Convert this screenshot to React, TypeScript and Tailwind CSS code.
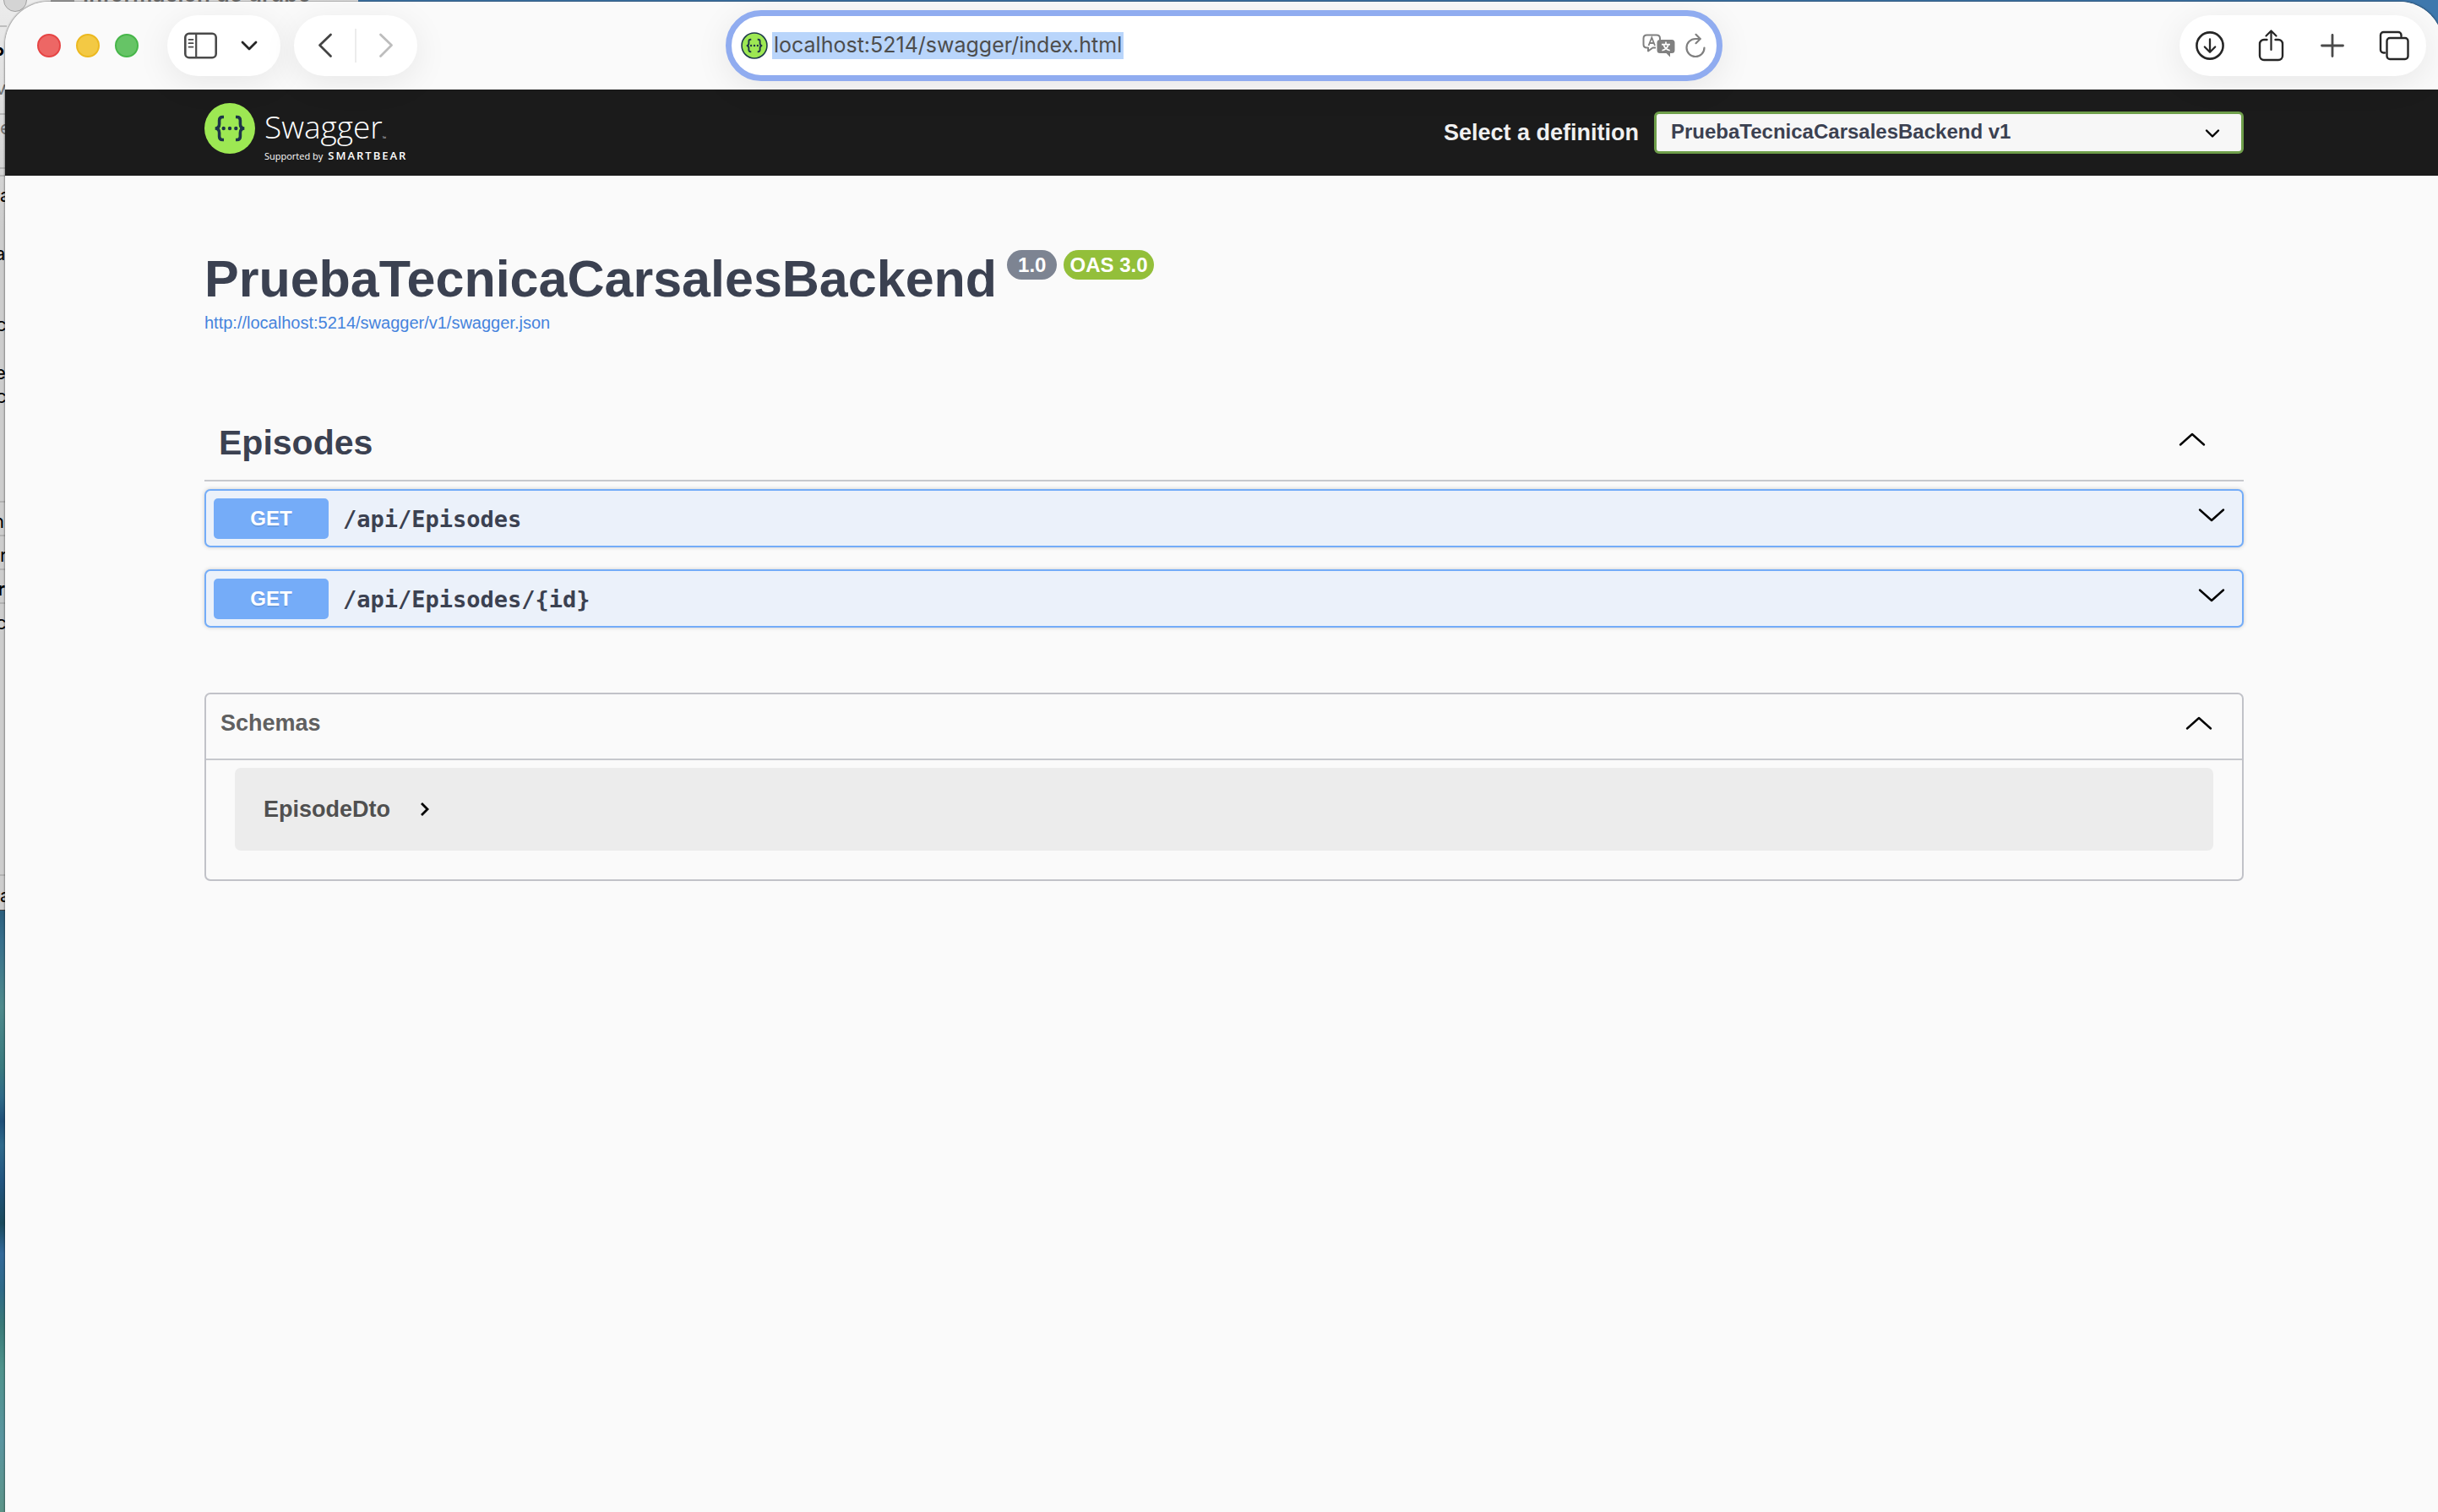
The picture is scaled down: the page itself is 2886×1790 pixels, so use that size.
import React from "react";

type Fragment = { char: string; className: string };

const fragments: Fragment[] = [
  { char: "P", className: "top-[50px] -left-[8px] text-[20px] font-bold text-black" },
  { char: "v", className: "top-[90px] -left-[5px] text-[22px] text-neutral-500" },
  { char: "e", className: "top-[137px] left-0 text-[22px] text-neutral-500" },
  { char: "a", className: "top-[217px] left-0 text-[22px] text-black" },
  { char: "a", className: "top-[286px] -left-[6px] text-[22px] text-black" },
  { char: "c", className: "top-[370px] -left-[5px] text-[22px] text-black" },
  { char: "e", className: "top-[427px] -left-[6px] text-[22px] text-black" },
  { char: "c", className: "top-[455px] -left-[5px] text-[22px] text-black" },
  { char: "n", className: "top-[603px] -left-[8px] text-[22px] text-black" },
  { char: "r", className: "top-[643px] left-0 text-[22px] text-black" },
  { char: "r", className: "top-[683px] -left-[3px] text-[22px] font-bold text-black" },
  { char: "c", className: "top-[723px] -left-[5px] text-[22px] text-black" },
  { char: "a", className: "top-[1046px] left-0 text-[22px] text-black" },
];

const rules = [
  "top-[30px]",
  "top-[134px]",
  "top-[198px]",
  "top-[207px]",
  "top-[593px]",
  "top-[633px]",
  "top-[673px]",
  "top-[713px]",
  "top-[1035px]",
];

const operations = [
  { method: "GET", path: "/api/Episodes" },
  { method: "GET", path: "/api/Episodes/{id}" },
];

const pill = "flex h-18 items-center rounded-full bg-white shadow-[0_8px_40px_rgba(0,0,0,0.08)]";

function BackgroundWindow() {
  return (
    <div
      aria-hidden="true"
      className="absolute top-0 left-0 h-[1078px] w-[424px] overflow-hidden border-b border-neutral-700 bg-linear-to-b from-[#ececec] to-[#cdcdcd] to-25% font-['Inter',sans-serif]"
    >
      <span className="absolute -top-[14px] left-1 size-7 rounded-full border border-neutral-400 bg-neutral-300" />
      <span className="absolute top-0 left-15 h-0.5 w-7 bg-neutral-400" />
      <span className="absolute -top-[23px] left-[98px] text-[26px] leading-8 font-semibold whitespace-nowrap text-neutral-500">
        Información de grupo
      </span>
      {rules.map((r) => (
        <span key={r} className={`absolute left-0 h-0.5 w-2 bg-neutral-400/60 ${r}`} />
      ))}
      {fragments.map((f, i) => (
        <span key={i} className={`absolute leading-7 ${f.className}`}>
          {f.char}
        </span>
      ))}
    </div>
  );
}

function Chevron({ up = false }: { up?: boolean }) {
  return (
    <svg
      viewBox="0 0 32 18"
      className="h-[18px] w-8"
      fill="none"
      stroke="black"
      strokeWidth="2.4"
      strokeLinecap="round"
      strokeLinejoin="round"
    >
      <path d={up ? "M2 15.5 16 3 30 15.5" : "M2 2.5 16 15 30 2.5"} />
    </svg>
  );
}

function BracesMark({ className, outlined = false }: { className: string; outlined?: boolean }) {
  return (
    <svg viewBox="0 0 60 60" className={className} fill="none">
      <circle
        cx="30"
        cy="30"
        r={outlined ? 28 : 30}
        fill="#9de853"
        stroke={outlined ? "#1d3a4a" : "none"}
        strokeWidth="3"
      />
      <g stroke="#1d3548" strokeWidth="3.6">
        <path d="M23 16.5h-1.5c-2.6 0-3.900 1.400-3.900 4v4.200c0 3-1.300 5.200-4.900 5.300 3.600.1 4.900 2.300 4.900 5.300v4.200c0 2.600 1.300 4 3.900 4H23" />
        <path d="M37 16.5h1.5c2.6 0 3.900 1.400 3.900 4v4.200c0 3 1.300 5.200 4.900 5.300-3.600.1-4.900 2.300-4.900 5.300v4.200c0 2.600-1.300 4-3.900 4H37" />
      </g>
      <g fill="#1d3548">
        <circle cx="22.7" cy="30" r="2.2" />
        <circle cx="30" cy="30" r="2.2" />
        <circle cx="37.3" cy="30" r="2.2" />
      </g>
    </svg>
  );
}

function BrowserToolbar() {
  return (
    <header className="flex h-26 items-center justify-between bg-[#fafafa] px-5">
      <div className="flex flex-1 items-center">
        <div className="ml-[18px] flex gap-[18px]">
          <button aria-label="Close" className="size-7 rounded-full border-2 border-[#e64545] bg-[#ed6765]" />
          <button aria-label="Minimize" className="size-7 rounded-full border-2 border-[#ecb920] bg-[#f3c944]" />
          <button aria-label="Zoom" className="size-7 rounded-full border-2 border-[#47b64a] bg-[#66c466]" />
        </div>
        <div className={`ml-[34px] w-[134px] justify-between pr-[27px] pl-5 ${pill}`}>
          <button aria-label="Sidebar">
            <svg viewBox="0 0 40 32" className="h-8 w-10" fill="none" stroke="#4a4a4a" strokeWidth="2.6">
              <rect x="1.3" y="1.8" width="36.4" height="28.4" rx="4.5" />
              <path d="M14.2 2v28" strokeWidth="2.2" />
              <path d="M5.5 8.800h5M5.5 13.200h5M5.5 17.600h5" strokeWidth="1.8" strokeLinecap="round" />
            </svg>
          </button>
          <button aria-label="Tab groups">
            <svg viewBox="0 0 20 14" className="h-3.5 w-5" fill="none" stroke="#262626" strokeWidth="2.8" strokeLinecap="round" strokeLinejoin="round">
              <path d="M2 3l8 8 8-8" />
            </svg>
          </button>
        </div>
        <div className={`ml-4 w-[146px] justify-between px-7 ${pill}`}>
          <button aria-label="Back">
            <svg viewBox="0 0 18 30" className="h-[30px] w-[18px]" fill="none" stroke="#444" strokeWidth="2.8" strokeLinecap="round" strokeLinejoin="round">
              <path d="M15.5 2 2.5 14.500l13 13" />
            </svg>
          </button>
          <span className="h-10 w-0.5 bg-[#ececec]" />
          <button aria-label="Forward" disabled>
            <svg viewBox="0 0 18 30" className="h-[30px] w-[18px]" fill="none" stroke="#bdbdbd" strokeWidth="2.8" strokeLinecap="round" strokeLinejoin="round">
              <path d="M2.5 2l13 12.500-13 13" />
            </svg>
          </button>
        </div>
      </div>

      <div className="flex h-21 w-[1180px] items-center rounded-full border-7 border-[#90acf0] bg-white pr-3 pl-[11px] shadow-[0_8px_40px_rgba(0,0,0,0.08)]">
        <BracesMark className="size-8" outlined />
        <input
          aria-label="Address"
          defaultValue="localhost:5214/swagger/index.html"
          className="ml-[5px] field-sizing-content h-8 bg-[#b9d5fb] px-0.5 font-['Inter',sans-serif] text-[25px] text-[#4d4d4d] outline-none"
        />
        <button aria-label="Translate" className="ml-auto">
          <svg viewBox="0 0 40 28" className="h-7 w-10" fill="none" stroke="#808080" strokeWidth="2">
            <path d="M16 16.500h-3.500L7 20.500v-4H5.500c-2.500 0-4-1.500-4-4V5.500c0-2.500 1.500-4 4-4h11.500c2.500 0 4 1.500 4 4V7" strokeLinejoin="round" />
            <path d="M7.500 14 11.300 4.500 15 14M8.800 11h5" strokeWidth="1.8" />
            <path d="M21 7h14a3.500 3.500 0 0 1 3.500 3.500v9A3.500 3.500 0 0 1 35 23h-2v4.500L28.500 23H21a3.500 3.500 0 0 1-3.500-3.500v-9A3.500 3.500 0 0 1 21 7Z" fill="#808080" stroke="none" />
            <path d="M28 9.500v2.800M23 12.700h10M31 12.700c-1 3.500-4 6-7.500 7M25.200 12.700c1 3.500 4 6 7.500 7" stroke="white" strokeWidth="1.7" />
          </svg>
        </button>
        <button aria-label="Reload" className="ml-2.5">
          <svg viewBox="0 0 26 30" className="h-[30px] w-[26px]" fill="none" stroke="#808080" strokeWidth="2.2" strokeLinecap="round" strokeLinejoin="round">
            <path d="M23.500 17.500A10.500 10.500 0 1 1 13 7h5.500" />
            <path d="M13.500 1.800 18.700 7l-5.200 5.200" />
          </svg>
        </button>
      </div>

      <div className="flex flex-1 justify-end">
        <div className={`w-[292px] justify-between pr-5 pl-[18px] ${pill}`}>
          <button aria-label="Downloads" className="flex w-9 justify-center">
            <svg viewBox="0 0 36 36" className="size-9" fill="none" stroke="#262626" strokeWidth="2.6" strokeLinecap="round" strokeLinejoin="round">
              <circle cx="18" cy="18" r="15.6" />
              <path d="M18 10.500v15M11.800 19.500l6.200 6.200 6.200-6.200" strokeWidth="2.3" />
            </svg>
          </button>
          <button aria-label="Share" className="flex w-9 justify-center">
            <svg viewBox="0 0 32 40" className="h-10 w-8" fill="none" stroke="#262626" strokeWidth="2.4" strokeLinecap="round" strokeLinejoin="round">
              <path d="M10.500 13H7a5 5 0 0 0-5 5v14a5 5 0 0 0 5 5h17a5 5 0 0 0 5-5V18a5 5 0 0 0-5-5h-3.500" />
              <path d="M15.500 25V3M9.500 8.500l6-6 6 6" strokeWidth="2.2" />
            </svg>
          </button>
          <button aria-label="New tab" className="flex w-9 justify-center">
            <svg viewBox="0 0 28 28" className="size-7" fill="none" stroke="#4a4a4a" strokeWidth="2.8" strokeLinecap="round">
              <path d="M14 1.500v25M1.500 14h25" />
            </svg>
          </button>
          <button aria-label="Tab overview" className="flex w-9 justify-center">
            <svg viewBox="0 0 36 36" className="size-9" fill="none" stroke="#262626" strokeWidth="2.4" strokeLinecap="round" strokeLinejoin="round">
              <path d="M7 26.500H5.500A3.500 3.500 0 0 1 2 23V5.500A3.500 3.500 0 0 1 5.500 2H23a3.500 3.500 0 0 1 3.500 3.500V7" />
              <rect x="9.5" y="9" width="25" height="25" rx="3.5" />
            </svg>
          </button>
        </div>
      </div>
    </header>
  );
}

function SwaggerTopbar() {
  return (
    <div className="flex h-[102px] items-center justify-between bg-[#1b1b1b] px-[236px]">
      <a href="#" aria-label="Swagger" className="flex items-start font-['Open_Sans',sans-serif] text-white">
        <BracesMark className="size-15" />
        <span className="ml-[11px] flex flex-col pt-0.5">
          <span className="flex items-end text-[37px] leading-[52px] font-light">
            Swagger
            <span className="text-[6px] leading-6">™</span>
          </span>
          <span className="flex items-baseline gap-1.5 text-[11px] leading-4">
            Supported by
            <span className="text-[13px] font-semibold tracking-[2px]">SMARTBEAR</span>
          </span>
        </span>
      </a>
      <div className="flex items-center gap-[18px]">
        <label htmlFor="definition" className="text-[27px] font-bold text-[#f0f0f0]">
          Select a definition
        </label>
        <div className="relative">
          <select
            id="definition"
            className="h-[50px] w-[698px] appearance-none rounded-md border-3 border-[#6f9f4b] bg-[#f7f7f7] px-[17px] pb-0.5 text-[24px] font-bold text-[#3b4151]"
          >
            <option>PruebaTecnicaCarsalesBackend v1</option>
          </select>
          <svg
            viewBox="0 0 18 12"
            className="pointer-events-none absolute top-5 right-7 h-3 w-[18px]"
            fill="none"
            stroke="black"
            strokeWidth="2.4"
            strokeLinecap="round"
            strokeLinejoin="round"
          >
            <path d="M2 2.500 9 9.500l7-7" />
          </svg>
        </div>
      </div>
    </div>
  );
}

function Operation({ method, path }: { method: string; path: string }) {
  return (
    <button className="flex h-[69px] w-full items-center rounded-[7px] border-2 border-[#73acf8] bg-[#ebf1fa] pr-5 pl-[9px] shadow-[0_0_5px_rgba(0,0,0,0.19)]">
      <span className="flex h-12 w-[136px] items-center justify-center rounded-[5px] bg-[#75acf8] text-[24px] font-bold text-white [text-shadow:0_2px_0_rgba(0,0,0,0.1)]">
        {method}
      </span>
      <span className="ml-[17px] pt-1 font-['DejaVu_Sans_Mono',monospace] text-[27px] font-bold">{path}</span>
      <span className="ml-auto pb-2">
        <Chevron />
      </span>
    </button>
  );
}

export default function App() {
  return (
    <div className="relative flex min-h-screen overflow-hidden bg-[#3f78ad] pt-0.5 pl-1.5 font-['Liberation_Sans',sans-serif] text-[#3b4151]">
      <div
        aria-hidden="true"
        className="absolute top-[1078px] bottom-0 left-0 w-1.5 bg-[linear-gradient(#2c5f7d,#386f8c_5%,#4f8a8c_16%,#3a7a7f_26%,#2f6a88_31%,#1f4f78_35%,#2f6a8c_39%,#225580_45%,#1a4a5c_52%,#33699a_57%,#2f6a88_63%,#3a7a78_69%,#4f938c_76%,#5a95a0_88%,#5c9488)]"
      />
      <BackgroundWindow />
      <div className="relative w-[calc(100%+6px)] shrink-0 overflow-hidden rounded-t-[52px] bg-[#fafafa] shadow-[0_0_2px_1px_rgba(0,0,0,0.35)]">
        <BrowserToolbar />
        <SwaggerTopbar />
        <main className="px-[236px] pt-[90px] pb-20">
          <div className="flex items-start">
            <h1 className="text-[61px] leading-16 font-bold">PruebaTecnicaCarsalesBackend</h1>
            <div className="-mt-0.5 ml-3 flex gap-2 text-[24px] leading-[35px] font-bold text-white">
              <span className="rounded-full bg-[#7d8492] px-[13px]">1.0</span>
              <span className="rounded-full bg-[#93bf3a] px-[7px]">OAS 3.0</span>
            </div>
          </div>
          <a href="#" className="mt-2 block w-fit text-[20px] leading-6 text-[#4583dd]">
            http://localhost:5214/swagger/v1/swagger.json
          </a>

          <section className="mt-[106px]">
            <button className="flex w-full items-center justify-between border-b-2 border-[#c6c8cd] pr-[45px] pb-5 pl-[17px]">
              <h2 className="text-[41px] leading-12 font-bold">Episodes</h2>
              <span className="pb-2">
                <Chevron up />
              </span>
            </button>
            <div className="mt-[9px] flex flex-col gap-[26px]">
              {operations.map((op) => (
                <Operation key={op.path} {...op} />
              ))}
            </div>
          </section>

          <section className="mt-[77px] rounded-[7px] border-2 border-[#c1c2c8]">
            <button className="flex w-full items-center justify-between border-b-2 border-[#c6c8cd] pt-[18px] pr-[35px] pb-[26px] pl-[17px]">
              <h3 className="text-[27px] leading-8 font-bold text-[#606060]">Schemas</h3>
              <Chevron up />
            </button>
            <div className="mx-[34px] mt-[9px] mb-[34px] flex h-[98px] items-center rounded-[7px] bg-[#ececec] pl-[34px]">
              <button className="flex items-center gap-[35px] text-[27px] leading-8 font-bold text-[#505050]">
                EpisodeDto
                <svg viewBox="0 0 12 18" className="h-[18px] w-3" fill="none" stroke="black" strokeWidth="2.8">
                  <path d="M2 2l7 7-7 7" />
                </svg>
              </button>
            </div>
          </section>
        </main>
      </div>
    </div>
  );
}
